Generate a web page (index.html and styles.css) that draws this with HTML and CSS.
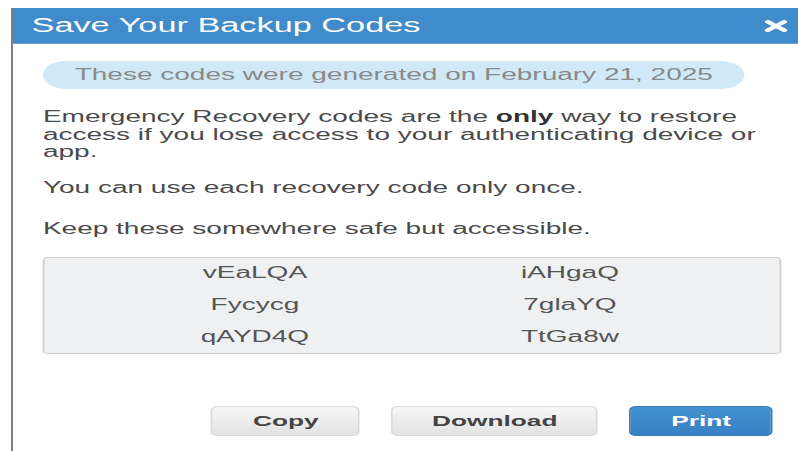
FILE: index.html
```html
<!DOCTYPE html>
<html lang="en">
<head>
<meta charset="utf-8">
<title>Save Your Backup Codes</title>
<link rel="stylesheet" href="styles.css">
</head>
<body>
<div class="frame">
  <div class="sheet">
    <div class="modal-head">
      <h1 class="modal-title">Save Your Backup Codes</h1>
      <button class="close" aria-label="Close">
        <svg viewBox="0 0 16 16" width="16" height="15" aria-hidden="true">
          <path d="M3 3 L13 12 M13 3 L3 12" stroke="#fff" stroke-width="3.6" stroke-linecap="round" fill="none"/>
        </svg>
      </button>
    </div>
    <div class="modal-body">
      <div class="stamp">These codes were generated on February 21, 2025</div>
      <p class="note">Emergency Recovery codes are the <b>only</b> way to restore access if you lose access to your authenticating device or app.</p>
      <p class="note">You can use each recovery code only once.</p>
      <p class="note note-last">Keep these somewhere safe but accessible.</p>
      <div class="codes">
        <span>vEaLQA</span><span>iAHgaQ</span>
        <span>Fycycg</span><span>7glaYQ</span>
        <span>qAYD4Q</span><span>TtGa8w</span>
      </div>
      <div class="actions">
        <button class="btn btn-copy">Copy</button>
        <button class="btn btn-download">Download</button>
        <button class="btn btn-primary btn-print">Print</button>
      </div>
    </div>
  </div>
</div>
</body>
</html>
```

FILE: styles.css
```css
html, body {
  margin: 0;
  padding: 0;
  background: #ffffff;
  overflow: hidden;
}

body {
  font-family: "Liberation Sans", Arial, sans-serif;
  color: #4a4a4a;
}

/* window edge on the left, running from the title bar down */
.frame {
  margin: 8px 0 0 11px;
  height: 443px;
  border-left: 2px solid #7d7d7d;
}

/* the dialog is drawn in a wide, stretched presentation */
.sheet {
  width: 448.6px;
  height: 443px;
  transform: scaleX(1.75);
  transform-origin: 0 0;
}

.modal-head {
  height: 35px;
  background: #3f8bcb;
  border-bottom: 1px solid #6aa5d8;
  display: flex;
  align-items: center;
  justify-content: space-between;
  padding: 0 5px 0 10.6px;
}

.modal-title {
  margin: 0;
  font-size: 19.6px;
  font-weight: normal;
  color: #ffffff;
  line-height: 1;
  padding-top: 1px;
}

.close {
  border: 0;
  background: none;
  padding: 0;
  margin: 0;
  width: 16px;
  height: 15px;
  display: flex;
  margin-top: 2px;
}

.modal-body {
  padding: 17px 9.2px 0 17.1px;
}

.stamp {
  width: 401px;
  height: 28px;
  box-sizing: border-box;
  border-radius: 14px;
  background: #cfe9f7;
  color: #8a8a8a;
  font-size: 16px;
  line-height: 28px;
  text-align: center;
}

.note {
  margin: 19px 0 0;
  font-size: 16px;
  line-height: 17.6px;
  color: #4a4a4a;
}

.note + .note {
  margin-top: 18px;
}

.note + .note-last {
  margin-top: 24px;
}

.note b {
  color: #333;
}

.codes {
  margin-top: 19px;
  height: 97px;
  box-sizing: border-box;
  border: 1px solid #cfcfcf;
  border-radius: 3px;
  background: #eef0f2;
  display: grid;
  grid-template-columns: 180px 180px;
  grid-auto-rows: 32px;
  justify-content: center;
  align-content: center;
  font-size: 16px;
  color: #555;
}

.codes span {
  display: flex;
  align-items: center;
  justify-content: center;
}

.actions {
  margin-top: 52px;
  display: flex;
  justify-content: flex-end;
  gap: 17.7px;
  padding-right: 5px;
}

.btn {
  height: 30px;
  box-sizing: border-box;
  border-radius: 4px;
  border: 1px solid #d9d9d9;
  background: linear-gradient(#f7f7f7, #e2e2e2);
  color: #444;
  font-family: "Liberation Sans", Arial, sans-serif;
  font-weight: bold;
  font-size: 15px;
  padding: 0;
}

.btn-copy { width: 85px; }
.btn-download { width: 118.3px; }
.btn-print { width: 82.3px; }

.btn-primary {
  border-color: #3a7ebd;
  background: linear-gradient(#4590d0, #3881c3);
  color: #ffffff;
}
```
